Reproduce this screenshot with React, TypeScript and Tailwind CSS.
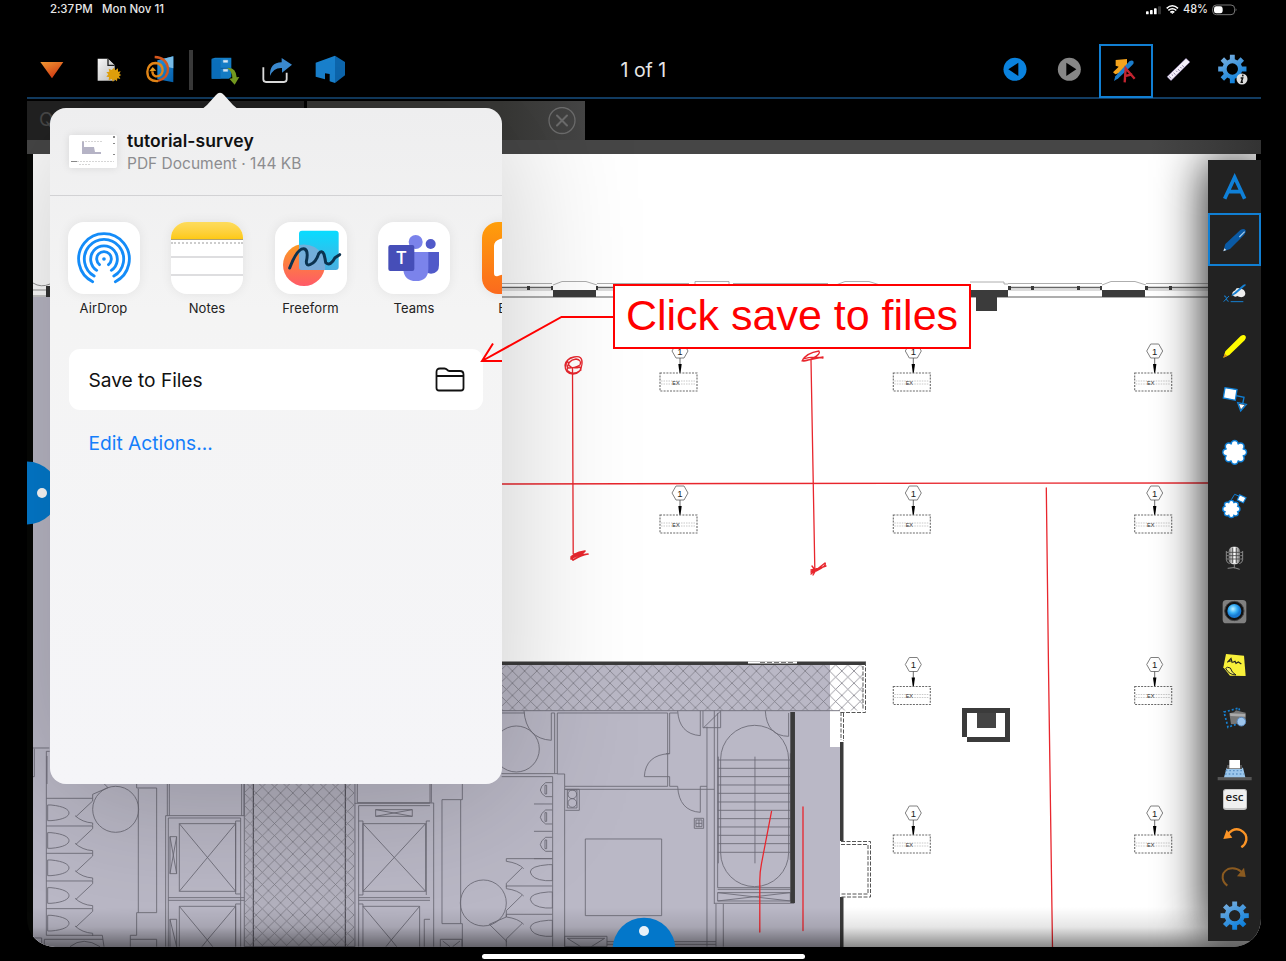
import React from "react";

const UI = "font-['Inter','Liberation_Sans',sans-serif]";

/** Icon cell: the view box is in thirds of a pixel. */
function Ico({ x, y, w = 159, h = 159, children }: { x: number; y: number; w?: number; h?: number; children: React.ReactNode }) {
  return (
    <svg className="block shrink-0" width={w / 3} height={h / 3} viewBox={`${x} ${y} ${w} ${h}`} fill="none">
      {children}
    </svg>
  );
}

function gearPath(cx: number, cy: number, outer: number, inner: number, hole: number) {
  let d = "";
  for (let i = 0; i < 8; i++) {
    const a = (i * Math.PI) / 4 - Math.PI / 2;
    const pts: [number, number][] = [
      [inner, -0.25],
      [outer, -0.17],
      [outer, 0.17],
      [inner, 0.25],
    ];
    for (const [r, o] of pts) {
      d += `${d ? "L" : "M"}${(cx + r * Math.cos(a + o)).toFixed(1)} ${(cy + r * Math.sin(a + o)).toFixed(1)}`;
    }
  }
  return `${d}ZM${cx - hole} ${cy}a${hole} ${hole} 0 1 0 ${2 * hole} 0a${hole} ${hole} 0 1 0 ${-2 * hole} 0Z`;
}

function Scallop({ cx, cy, r }: { cx: number; cy: number; r: number }) {
  const dots = Array.from({ length: 8 }, (_, i) => {
    const a = (i * Math.PI) / 4;
    return [cx + r * 0.72 * Math.cos(a), cy + r * 0.72 * Math.sin(a)];
  });
  return (
    <g>
      {dots.map(([x, y], i) => (
        <circle key={i} cx={x} cy={y} r={r * 0.26} stroke="#0f7fd6" strokeWidth="7" />
      ))}
      {dots.map(([x, y], i) => (
        <circle key={i} cx={x} cy={y} r={r * 0.23} fill="#fff" />
      ))}
      <circle cx={cx} cy={cy} r={r * 0.74} fill="#fff" />
    </g>
  );
}

function Defs() {
  return (
    <svg width="0" height="0" className="absolute">
      <defs>
        <linearGradient id="orange" x1="0" y1="0" x2="0.6" y2="1"><stop stopColor="#f59b33" /><stop offset="1" stopColor="#d83a12" /></linearGradient>
        <linearGradient id="blue" x1="0" y1="0" x2="1" y2="1"><stop stopColor="#2a9ae8" /><stop offset="1" stopColor="#0565b5" /></linearGradient>
        <linearGradient id="gear" x1="0" y1="0" x2="0.6" y2="1"><stop stopColor="#86b4de" /><stop offset="1" stopColor="#0b7fdc" /></linearGradient>
        <linearGradient id="paper" x1="0" y1="0" x2="1" y2="1"><stop stopColor="#fff" /><stop offset="1" stopColor="#c9c9c9" /></linearGradient>
        <linearGradient id="metal" x1="0" x2="1" y1="0" y2="0"><stop stopColor="#777" /><stop offset=".5" stopColor="#fff" /><stop offset="1" stopColor="#777" /></linearGradient>
        <radialGradient id="lens" cx=".4" cy=".35"><stop stopColor="#bff0ff" /><stop offset=".6" stopColor="#35aef5" /><stop offset="1" stopColor="#1878d0" /></radialGradient>
      </defs>
    </svg>
  );
}

function StatusBar() {
  return (
    <div className={`flex h-[19px] items-center justify-between pl-[50px] pr-[49px] text-[11.500px] font-medium text-[#e8e8e8] ${UI}`}>
      <div className="flex gap-[9px] whitespace-pre">
        <span className="w-[43px] tracking-[-0.1px] [word-spacing:-2px]">2:37 PM</span>
        <span>Mon Nov 11</span>
      </div>
      <div className="flex items-center">
        <svg width="91" height="14" viewBox="498 8 273 42" fill="none">
          <rect x="498" y="33" width="8" height="9" rx="2" fill="#fff" />
          <rect x="510" y="29" width="8" height="13" rx="2" fill="#fff" />
          <rect x="522" y="24" width="8" height="18" rx="2" fill="#fff" />
          <rect x="534" y="18" width="9" height="24" rx="2" fill="#333" />
          <path d="M560 24q17-15 34 0M565 30q12-10 24 0M571 36q6-5 12 0" stroke="#fff" strokeWidth="4.5" />
          <path d="M572 36h10l-5 5z" fill="#fff" />
          <text x="609" y="39" fill="#e8e8e8" fontSize="34" fontWeight="500" fontFamily="Inter" textLength="75" lengthAdjust="spacingAndGlyphs">48%</text>
          <rect x="698" y="14" width="66" height="29" rx="11" stroke="#777" strokeWidth="3" />
          <rect x="702" y="18" width="26" height="21" rx="7" fill="#fff" />
          <path d="M767 24q5 4 0 9z" fill="#777" />
        </svg>
      </div>
    </div>
  );
}

function Toolbar() {
  return (
    <div className="mt-6 ml-[25px] flex h-[54px] w-[1234px] items-center">
      <Ico x={15} y={129} w={162} h={162}>
        <path d="M61 186h69l-34 49z" fill="url(#orange)" />
      </Ico>
      <Ico x={177} y={129} w={162} h={162}>
        <path d="M233 176h31l20 20v46h-51z" fill="url(#paper)" />
        <path d="M264 176v20h20" fill="#ddd" stroke="#222" strokeWidth="4" />
        <path d="M282 203l4 8 8-6v10l8-1-4 8 6 3-7 4 4 8-9-2-1 9-8-6-4 8-4-9-9 4 1-10-8-1 6-7-6-6 9-2-2-9 9 4z" fill="#e9a60c" />
      </Ico>
      <Ico x={339} y={129} w={162} h={162}>
        <path d="M412 181l48-12v78l-48-9z" fill="url(#blue)" />
        <path d="M428 177l32-8v36q-22-2-32-28z" fill="#7cc4f2" />
        <path d="M404 171q36 2 40 34 1 29-30 38" stroke="#dd5a1e" strokeWidth="7" />
        <path d="M414 243q-32 2-32-28 3-26 25-26 21 2 21 23-3 18-21 17-10-3-10-15" stroke="#ee8d18" strokeWidth="7" />
        <path d="M388 214l10-13 11 11z" fill="#f5a520" />
      </Ico>
      <div className="ml-0.5 h-10 w-1 bg-[#3c3c3c]" />
      <div className="ml-[5px] flex">
        <Ico x={535} y={129} h={162}>
          <path d="M576 176l10-3h49v58l-8 5h-51z" fill="#1583d0" />
          <path d="M576 178h27v58h-27z" fill="#0b74c4" />
          <path d="M603 205h31" stroke="#0a4f8c" strokeWidth="2" />
          <path d="M611 181h13v6h-13zM611 208h13v6h-13z" fill="#e8f4ff" stroke="#bfe0f8" strokeWidth="2" />
          <path d="M622 204q27-3 29 28l8-1-14 23-16-18 9-1q1-20-16-31z" fill="#7ba322" />
        </Ico>
        <Ico x={694} y={129} h={162}>
          <path d="M731 202v36q0 8 8 8h54q8 0 8-8v-20" stroke="#e8e8e8" strokeWidth="5.500" />
          <path d="M751 228q-2-40 35-41v-13l31 20-30 24v-14q-25-2-36 24z" fill="#3d8fd8" />
        </Ico>
        <Ico x={853} y={129} h={162}>
          <path d="M888 188l58-21v82l-16-5v-22l-14-2v18l-28-8z" fill="#1a86d6" />
          <path d="M946 167l30 19v40l-30 23z" fill="#0d6ab4" />
        </Ico>
      </div>
      <div className={`flex-1 pt-0.5 pl-[263.500px] text-[19.500px] text-[#e6e6e6] ${UI}`}>
        <span className="whitespace-nowrap">1 of 1</span>
      </div>
      <Ico x={25} y={129} w={162} h={162}>
        <circle cx="106" cy="208" r="34.500" fill="#0a82de" />
        <path d="M86 208l30-20v40z" fill="#000" />
      </Ico>
      <Ico x={187} y={129} w={162} h={162}>
        <circle cx="269" cy="208" r="34.500" fill="#868686" />
        <path d="M290 208l-30-20v40z" fill="#000" />
      </Ico>
      <div className="ml-[3px] mt-px flex size-[54px] items-center justify-center border-2 border-[#117fd3]">
        <Ico x={363} y={135} w={150} h={150}>
          <path d="M407 177l34-3v20l-8 10-13 11-14 5-7-6 17-17-9-3z" fill="#f5a31c" />
          <path d="M449 180q8-4 12 2 1 5-4 10l-42 40-13 8 4-14z" fill="#1a7dcc" />
          <path d="M434 244l3-42 27 31M435 225l22-5" stroke="#c42430" strokeWidth="7" />
        </Ico>
      </div>
      <Ico x={519} y={129} w={162} h={162}>
        <path d="M561 230l57-55 12 11-57 56z" fill="#f5f0fa" stroke="#56467a" strokeWidth="1.500" />
        <path d="M568 229l5 6m2-12l4 4m2-9l5 6m2-12l4 4m2-9l5 6m2-12l4 4m2-9l5 6" stroke="#56467a" strokeWidth="2" />
      </Ico>
      <Ico x={681} y={129} w={157} h={162}>
        <path d={gearPath(757, 207, 43, 30, 17)} fill="url(#gear)" fillRule="evenodd" />
        <circle cx="786" cy="237" r="16.500" fill="#ddd" />
        <path d="M789 224l-1 5M782 234h6l-4 13h5" stroke="#111" strokeWidth="4.500" />
      </Ico>
    </div>
  );
}

function TabStrip() {
  return (
    <div className="ml-[27px] w-[1234px]">
      <div className="h-[2px] bg-[#123c62]" />
      <div className="h-[2px] bg-black" />
      <div className="flex h-[39px]">
        <div className={`mr-[3px] w-[277px] bg-[#222] pl-3 text-[19px] leading-[38px] text-[#484848] ${UI}`}>Q</div>
        <div className="flex w-[278px] items-center justify-end bg-linear-to-r from-[#383836] from-70% to-[#454545] pr-[9px]">
          <svg width="28" height="28" viewBox="0 0 28 28" fill="none" stroke="#6c6c6c" strokeWidth="1.300">
            <circle cx="14" cy="13.500" r="13" />
            <path d="M9 8.500l10 10M19 8.500l-10 10" strokeWidth="2" strokeLinecap="round" />
          </svg>
        </div>
      </div>
      <div className="flex h-[14px] bg-[#464646]">
        <div className="ml-auto w-[110px] bg-linear-to-r from-transparent to-[#333]" />
      </div>
    </div>
  );
}

function Fixture({ x, y }: { x: number; y: number }) {
  return (
    <g transform={`translate(${x} ${y})`}>
      <path d="M-8 0l4-7h8l4 7-4 7h-8z" fill="#fff" stroke="#808080" strokeWidth="1" />
      <text x="0" y="3.500" fontSize="9.500" textAnchor="middle" fontFamily="Liberation Sans" fill="#222">1</text>
      <path d="M0 7v10" stroke="#444" strokeWidth=".8" />
      <path d="M-1.700 13h3.400l-1.200 9h-1z" fill="#000" />
      <rect x="-20" y="22" width="37" height="18" stroke="#6a6a6a" strokeWidth="1.100" strokeDasharray="2 1.200" />
      <path d="M-19 30h35M-19 33h35" stroke="#bbb" strokeWidth=".8" strokeDasharray="1.500 1" />
      <text x="-4" y="33.500" fontSize="5.500" textAnchor="middle" fontFamily="Liberation Sans" fill="#333">EX</text>
    </g>
  );
}

const INK = "#6b6975";

function Shaft({ x, y, w, h }: { x: number; y: number; w: number; h: number }) {
  return <path d={`M${x} ${y}h${w}v${h}h${-w}zl${w} ${h}M${x + w} ${y}l${-w} ${h}`} />;
}

function FloorPlan() {
  return (
    <svg className="col-start-1 row-start-1 block" width="1234" height="793" viewBox="27 154 1234 793" fill="none">
      <defs>
        <pattern id="hatch" width="12.200" height="12.200" patternUnits="userSpaceOnUse">
          <path d="M0 0L12.200 12.200M12.200 0L0 12.200" stroke="#7a7883" strokeWidth=".75" />
        </pattern>
        <linearGradient id="floor" x1="0" y1="0" x2="0" y2="1">
          <stop stopColor="#000" stopOpacity="0" /><stop offset=".5" stopColor="#000" stopOpacity=".1" /><stop offset="1" stopColor="#000" stopOpacity=".46" />
        </linearGradient>
      </defs>
      <path d="M27 154h6v793h-6z" fill="#060705" />
      <path d="M33 154h1223v6h5v787H33z" fill="#fff" />
      <path d="M33 297h300v367h497v83h10v200H33z" fill="#bab8c6" />

      {/* facade */}
      <g>
        <path d="M33 283q8 5 17 1M33 290h13M33 296h13" stroke="#777" strokeWidth=".8" />
        <path d="M46 286h5v11h-5z" fill="#333" />
        <path d="M501 283.500h51M597 283.500h92M733 283.500h95M1008 283.500h94M1146 283.500h62M553 285l9-3.500h24l11 3.500M836 285l9-3.500h24l11 3.500M970 282h34v2h4M1102 285l9-3.500h24l11 3.500M695 284v-2.500h34v2.500" stroke="#999" strokeWidth=".8" />
        <path d="M501 287.500h52M596 287.500h374M1008 287.500h94M1146 287.500h62" stroke="#666" strokeWidth="1.400" />
        <path d="M501 290h52M596 290h374M1008 290h94M1146 290h62" stroke="#bbb" strokeWidth="1.200" />
        <path d="M501 297h707" stroke="#939393" strokeWidth="1.600" />
        <path d="M553 290h43v7h-43zM970 290h38v7h-38zM1102 290h43v7h-43zM976 297h21v14h-21zM527 286h3v4h-3zM551 286h2v4h-2zM596 286h2v4h-2zM1008 286h3v4h-3zM1031 286h3v4h-3zM1077 286h3v4h-3zM1100 286h2v4h-2zM1145 286h3v4h-3zM1169 286h3v4h-3z" fill="#3b3b3b" />
      </g>

      {/* corridor */}
      <path d="M830 664h36v47h-25v36h-11z" fill="#fff" />
      <path d="M501 664h362v46.500H501z" fill="url(#hatch)" />
      <path d="M501 661.500h365v3.500H501z" fill="#3b3b3b" />
      <path d="M748 661.500h49v2h-49z" fill="#fff" />
      <path d="M760 662.500h34" stroke="#777" strokeDasharray="5 2" />
      <path d="M865.500 662v50.500h-25M863 666v43M841 712v28M843.500 713v28" stroke="#555" strokeDasharray="4 1.500" />
      <path d="M840 742h3.500v99H840zM840 897h3.500v50H840z" fill="#3b3b3b" />
      <path d="M840 841h30v55h-30z" fill="#fff" />
      <path d="M841 841.500h29.500v55.500H841M841 844.500h27v49.500H841" stroke="#555" strokeDasharray="4 1.500" />

      {/* stair and office wing, drawn on a 1:3 grid */}
      <g transform="translate(430 640) scale(.3333)" stroke={INK} strokeWidth="2.600">
        <path d="M215 212h1015M215 219h69M364 219h10v182H215M382 219h331v220H404v-37h-22zM374 401h8M404 448h449M719 219h24M719 219v122h-11M719 410v29h24M719 410h-76M811 439h20M643 410q4-66 76-69M743 212q4 70 68 75v-75M743 439q4 74 68 78v-78M282 212q6 84 82 89v-82" />
        <circle cx="259" cy="327" r="69" />
        <path d="M404 439v481M368 410v510M215 410h153M831 260v660M853 212v580M880 792v128M858 792v128M531 905h327M531 913h327" />
        <path d="M819 212v51h53v-51M821 263l50-49M863 219v524h218M1076 219v70M853 790h240M863 748h218M863 758h218v25H863zl218 25M1081 758l-218 25" />
        <path d="M872 358a102 102 0 0 1 204 0v280a102 102 0 0 1-204 0zM865 350v320M1081 340v320M975 350v320M1006 212q4 76 70 77" />
        <path d="M863 360h218M863 385h218M863 410h218M863 435h218M863 460h218M863 486h218M863 511h218M863 536h218M863 561h218M863 586h218M863 611h218M863 637h218" />
        <path d="M1081 216h14v573h-14z" fill="#3b3b3b" stroke="none" />
        <path d="M466 597h229v230H466zM406 448h42v63h-42M412 450h29v54h-29zM793 535h28v30h-28zM798 540h18v20h-18zM807 540v20M798 550h18" />
        <circle cx="427" cy="463" r="13" /><circle cx="427" cy="489" r="13" />
        <path d="M404 889h127v31H404zM412 895h112M412 895l40 25M524 895l-40 25M31 898h65M31 898v22M38 903l22 17M90 903l-22 17M96 898v22" />
        <path d="M0 430v59h11v431M4 432v56M36 479h56v372H36zM97 430v49h-5M97 851v69M92 851h5" />
        <circle cx="160" cy="789" r="69" />
        {[428, 510, 592].map((y) => (
          <path key={y} d={`M367 ${y}h-20q-15 10-16 22q2 12 16 20h20M350 ${y + 8}h-5v26h5zM312 ${y + 64}h55`} />
        ))}
        {[656, 738, 823].map((y) => (
          <path key={y} d={`M367 ${y}H229v8q36 5 52 22M276 ${y + 28}l-47 46v10M367 ${y + 18}h-12q-54 4-54 22 4 22 46 26h20z`} />
        ))}
        <path d="M229 823v8l-51 22 51 50v17" />
      </g>

      {/* washrooms, lifts and riser, drawn on a 1:3 grid */}
      <g transform="translate(0 700) scale(.3333)" stroke={INK} strokeWidth="2.600">
        <path d="M99 144h49M103 146v84h-4M139 154v552h168l5 34M139 154h10M141 168v84" />
        {[295, 378, 460, 543, 626].map((y) => (
          <path key={y} d={`M139 ${y}h139v8l-50 47M225 ${y + 52}q22 20 53 22v8M143 ${y + 20}h10c40 4 54 14 54 24s-16 20-54 23h-10z`} />
        ))}
        <path d="M278 295v-12l46-20-14-14" />
        <circle cx="347" cy="328" r="69" />
        <path d="M410 250v14h60v374h-60v68h-19v34M415 266v372M391 718h79v22M133 740v-22h176M210 740q40-32 90 0M99 714h26v26" />
        <path d="M502 250v97M508 250v97M725 250v97M732 250v97M497 740V347h236M505 740V354h217v386M505 593h228M505 601h228M707 363h15M707 363v219h15M707 612h15M707 612v128" />
        <Shaft x={538} y={371} w={169} h={203} />
        <Shaft x={510} y={410} w={20} h={111} />
        <path d="M538 740V619h169v121M538 619l84 101 85-101M622 720l-16 20M622 720l16 20M510 740v-82h20v82M510 658l20 82" />
        <path d="M733 250h332v490H733z" fill="#000" fillOpacity=".03" />
        <path d="M760 250v490M1036 250v490" stroke="#3f3e46" strokeWidth="3" />
        <path d="M1072 250v58h218M1064 310h226M1076 740V317h214M1076 593h214M1076 601h214M1076 363h13v222h-13M1076 612h13v128M1279 363h11M1279 585V363" />
        <Shaft x={1127} y={329} w={110} h={20} />
        <Shaft x={1089} y={371} w={188} h={203} />
        <path d="M1089 619h170v121M1089 619l85 101 85-101M1174 720l-16 20M1174 720l16 20M1273 740v-82h17" />
      </g>
      <path d="M245 783h109v164H245z" fill="url(#hatch)" />

      {/* plinth */}
      <path d="M962 708h48v34h-43v-5h-5z" fill="#3b3b3b" />
      <path d="M967 713h38v24h-38z" fill="#fff" />
      <path d="M977 713h19v15h-19z" fill="#444" />

      {[680, 913.3, 1154.700].map((x) =>
        [351, 493, 664.500, 813].filter((y) => x > 700 || y < 600).map((y) => <Fixture key={`${x}-${y}`} x={x} y={y} />)
      )}

      {/* red ink */}
      <g stroke="#e8262d" strokeWidth="1.300" strokeLinecap="round" strokeLinejoin="round">
        <path d="M501 484l240-.5 467-.5" />
        <path d="M1046.300 488l2.200 180 4 279" />
        <path d="M572.500 368l.7 186M811 360l3.800 208M771.500 811.500l-10 52q-2 10-1.700 20v48.500M803 807v123.500" />
        <path d="M566 366q0-8 8-9 9-2 8 7-1 10-9 10-8 0-8-9 1-6 9-8M567 371q0-11 9-12 6 1 4 6-5 3-12 3M568 362q1 8 12 5l1 3q-8 6-13 1" />
        <path d="M571 559q1-6 14-8l-4 4 7-1q-7 1-15 6l-2-3 10-3-9 4M572 556l12-4M573 560l9-5M574 554l8 0" strokeWidth="1.700" />
        <path d="M802 361q4-8 17-10 2 3-6 7-8 4-10 3l20-4M803 359q9-3 20-1" />
        <path d="M811 574l14-11q2 3-9 8l-5 1 4-2-3-4M811 570l9-2 6-2M813 575l3-5" strokeWidth="1.400" />
      </g>

      <path d="M33 907h1228v40H33z" fill="url(#floor)" />
      <circle cx="27" cy="493" r="31.500" fill="#037bcf" />
      <circle cx="42" cy="493" r="5" fill="#fff" />
      <circle cx="644" cy="949" r="31.300" fill="#0377ca" />
      <circle cx="644" cy="931" r="5" fill="#e8f1f8" />
    </svg>
  );
}

function ToolPalette() {
  return (
    <div className="col-start-1 row-start-1 mt-1.5 mb-[7px] flex w-[53px] flex-col justify-self-end bg-[#222] shadow-[0_0_50px_rgba(0,0,0,0.95)]">
      <Ico x={55} y={29}>
        <path d="M105 145l30-64 30 64M114 124h42" stroke="#0f80d8" strokeWidth="11" />
      </Ico>
      <div className="flex size-[53px] items-center justify-center border-2 border-[#117fd3]">
        <Ico x={61} y={194} w={147} h={147}>
          <path d="M101 303l6-22 45-42q11-7 16 1 2 6-4 13l-43 43z" fill="#0a5aa5" />
          <path d="M149 260l16-16" stroke="#a9cdea" strokeWidth="3.500" />
          <path d="M101 303l3-9 6 5z" fill="#ddd" />
        </Ico>
      </div>
      <Ico x={55} y={347}>
        <path d="M129 434q-4-9 8-14 2-10 16-5 12 1 14 14 0 10-12 12-8-2-12-4-8 5-14-3z" fill="#eee" />
        <path d="M128 432l32-28q7-4 9 0l-30 26-14 8z" fill="#1680d2" />
        <path d="M103 437q6-2 7 7t7 9M118 437l-16 17M123 454h38" stroke="#1680d2" strokeWidth="3" />
      </Ico>
      <Ico x={55} y={506}>
        <path d="M101 622l6-19 46-46q10-7 15 1 3 7-3 12l-46 44z" fill="#fffb00" />
        <path d="M101 622l4-12 8 7z" fill="#d98a1c" />
      </Ico>
      <Ico x={55} y={665}>
        <path d="M106 712l36 6-5 32-36-7z" fill="#fff" stroke="#0f7fd6" strokeWidth="4" />
        <path d="M139 736l24 5-4 20M144 757l26 5-17 20z" stroke="#0f7fd6" strokeWidth="4" />
        <path d="M148 761l17 3-11 13z" fill="#fff" />
      </Ico>
      <Ico x={55} y={824}>
        <Scallop cx={135} cy={906} r={35} />
      </Ico>
      <Ico x={55} y={983}>
        <Scallop cx={125} cy={1076} r={25} />
        <path d="M125 1048l10-16 15 6" stroke="#0f7fd6" strokeWidth="3" />
        <path d="M150 1033l19 9-8 15-18-8z" fill="#fff" stroke="#0f7fd6" strokeWidth="3.500" />
      </Ico>
      <Ico x={55} y={2}>
        <rect x="117" y="49" width="34" height="53" rx="14" fill="url(#metal)" />
        <path d="M118 66h33M118 76h33M118 86h33M129 52v46M140 52v46" stroke="#444" strokeWidth="2.500" />
        <path d="M110 62v26q1 10 10 12M159 62v26q-1 10-10 12M110 66h7M110 76h7M110 86h7M152 66h7M152 76h7M152 86h7M134 100v14M114 114q20-6 36 3" stroke="#888" strokeWidth="3" />
      </Ico>
      <Ico x={55} y={161}>
        <rect x="99" y="209" width="71" height="70" rx="11" fill="#808080" />
        <circle cx="134" cy="242" r="29" fill="#111" stroke="#444" strokeWidth="3" />
        <circle cx="134" cy="242" r="21" fill="url(#lens)" />
      </Ico>
      <Ico x={55} y={320}>
        <path d="M109 371l54 5 5 61-47-1-20-25z" fill="#f8f03a" />
        <path d="M108 414q4-6 14-1 4 14 17 21-20 0-31-20z" fill="#f4ee62" stroke="#222" strokeWidth="3" />
        <path d="M113 396l11-12 4 14M117 393l10-3M130 396l6-3 3 6 7-4 9 6" stroke="#222" strokeWidth="3.500" />
      </Ico>
      <Ico x={55} y={479}>
        <path d="M103 545l45-12 7 43-40 15z" stroke="#1680d2" strokeWidth="5" strokeDasharray="6 6" />
        <path d="M119 549l14-3 6-6 16 4 13 3v31l-44 4z" fill="#777" />
        <path d="M121 549l46 2v8l-45-2z" fill="#aaa" />
        <circle cx="155" cy="574" r="13" fill="#9cc4ec" stroke="#5a86b8" strokeWidth="3" />
      </Ico>
      <Ico x={55} y={638} h={120}>
        <path d="M84 740h102v10H84z" fill="#555" />
        <path d="M111 712h49l7 29h-64z" fill="#9cc7ec" />
        <path d="M108 721h54M106 731h57" stroke="#5f94c6" strokeWidth="4" strokeDasharray="5 6" />
        <path d="M112 704h45v12h-45z" fill="#555" />
        <path d="M119 689h32v25h-32z" fill="#fff" />
      </Ico>
      <div className="mx-auto mt-[6px] mb-[7px] h-[21px] w-6 rounded-[3px] border border-b-2 border-[#c4c4c4] bg-[#f0f0f0] text-center font-['Open_Sans',sans-serif] text-[11.500px] font-semibold leading-[14px] text-[#222]">esc</div>
      <Ico x={55} y={860} h={120}>
        <path d="M115 911q18-20 37-12 20 10 18 30-3 14-15 22" stroke="#fb9426" strokeWidth="7" />
        <path d="M101 926l10-28 17 24z" fill="#fb9426" />
      </Ico>
      <Ico x={55} y={980} h={114}>
        <path d="M155 1024q-18-15-40-8-18 10-16 27 2 14 14 23" stroke="#8a5a20" strokeWidth="6" />
        <path d="M168 1040l-5-28-21 26z" fill="#8a5a20" />
      </Ico>
      <Ico x={55} y={1094} h={137}>
        <path d={gearPath(135, 1156, 43, 30, 17)} fill="url(#gear)" fillRule="evenodd" />
      </Ico>
    </div>
  );
}

function AppTile({ label, children }: { label: string; children: React.ReactNode }) {
  return (
    <div className="flex w-[72px] shrink-0 flex-col items-center">
      <div className="size-[72px] overflow-hidden rounded-2xl bg-white shadow-[0_0_12px_rgba(0,0,0,0.07)]">{children}</div>
      <span className="mt-[6px] whitespace-nowrap text-[13px] leading-[17px] tracking-[0.1px] text-[#222]">{label}</span>
    </div>
  );
}

function ShareSheet() {
  return (
    <div className={`absolute top-[108px] left-[50px] h-[675.500px] w-[451.500px] rounded-[16px] shadow-[0_10px_140px_rgba(0,0,0,0.22)] ${UI}`}>
      <svg className="absolute -top-[16px] left-[150px]" width="40" height="17" viewBox="0 0 40 17">
        <path d="M0 17q4-.5 7-4L16 3q4-4.500 8 0l9 10q3 3.500 7 4z" fill="#efefef" />
      </svg>
      <div className="flex h-full flex-col overflow-hidden rounded-[16px] bg-linear-to-b from-[#eeeeef] via-[#f4f4f4] via-30% to-[#f5f5f8]">
        <div className="flex h-[88px] shrink-0 gap-[10px] border-b border-[#d2d2d4] pt-[22px] pl-[19px]">
          <svg className="mt-[5px] rounded-[2px] shadow-[0_0_8px_rgba(0,0,0,0.1)]" width="48" height="33" viewBox="0 0 48 33" fill="none">
            <rect width="48" height="33" fill="#fff" />
            <path d="M13 6h2v6h10l1 5h6v2H13z" fill="#b5b3c5" />
            <path d="M13 6.500h20M2 26.500h43M10 29.500h12" stroke="#ccc" strokeWidth=".8" strokeDasharray="2 1" />
            <path d="M44 1h2v2h-2zM44 8h2v1h-2zM44 19h2v1h-2zM2 26h6v1H2z" fill="#888" />
          </svg>
          <div>
            <div className="text-[17.500px] leading-[21px] font-semibold tracking-[0.06px] text-[#111]">tutorial-survey</div>
            <div className="mt-[3px] text-[15.500px] leading-[20px] text-[#8c8c8f]">PDF Document · 144 KB</div>
          </div>
        </div>
        <div className="flex shrink-0 gap-[31.500px] pt-[26px] pl-[17.500px]">
          <AppTile label="AirDrop">
            <svg width="72" height="72" viewBox="0 0 216 216" fill="none" stroke="#148cf8" strokeWidth="8.500" strokeLinecap="round">
              <circle cx="108" cy="111" r="5.500" fill="#148cf8" stroke="none" />
              <path d="M94.500 128a22 22 0 1 1 27 0M86 145a40 40 0 1 1 44 0M78.500 162a59 59 0 1 1 59 0M74 179a76 76 0 1 1 68 0" />
            </svg>
          </AppTile>
          <AppTile label="Notes">
            <div className="h-[18px] border-b border-[#b0a070] bg-linear-to-b from-[#fddc5c] to-[#fdc90f]" />
            <div className="h-[4px] border-b-2 border-dotted border-[#ccc]" />
            <div className="h-[14px] border-b-2 border-[#dedee0]" />
            <div className="h-[18px] border-b-2 border-[#dedee0]" />
          </AppTile>
          <AppTile label="Freeform">
            <svg width="72" height="72" viewBox="702 366 216 216" fill="none">
              <defs>
                <linearGradient id="ffo" x1="0" y1="0" x2="0" y2="1"><stop stopColor="#fb9a22" /><stop offset="1" stopColor="#ff5a68" /></linearGradient>
                <linearGradient id="ffb" x1="0" y1="0" x2="0" y2="1"><stop stopColor="#08dcff" /><stop offset="1" stopColor="#4aaee0" /></linearGradient>
              </defs>
              <circle cx="789" cy="495" r="63" fill="url(#ffo)" />
              <rect x="774" y="392" width="119" height="118" rx="9" fill="url(#ffb)" />
              <path d="M774 435q45-8 72 30 8 22 6 45h-70q-8 0-8-8z" fill="#8aa8d4" opacity=".75" />
              <path d="M746 504q24-63 45-57 12 5 5 38 0 13 11 9 18-6 26-33 10-12 16 2 4 15 5 25 15 12 28-15l14-9" stroke="#0b3350" strokeWidth="9" strokeLinecap="round" strokeLinejoin="round" />
            </svg>
          </AppTile>
          <AppTile label="Teams">
            <svg width="72" height="72" viewBox="1014 366 216 216" fill="none">
              <circle cx="1127" cy="426" r="21" fill="#7b83eb" />
              <circle cx="1172" cy="432" r="15" fill="#5059c9" />
              <path d="M1150 456h47v39q0 26-24 26-15 0-23-16z" fill="#5059c9" />
              <path d="M1090 456h75v50q0 37-37 37t-38-37z" fill="#7b83eb" />
              <rect x="1045" y="435" width="78" height="78" rx="6" fill="#464eb8" />
              <text x="1084" y="493" fill="#fff" fontSize="54" fontWeight="600" textAnchor="middle" fontFamily="Open Sans">T</text>
            </svg>
          </AppTile>
          <AppTile label="Books">
            <svg width="72" height="72" viewBox="0 0 72 72">
              <defs><linearGradient id="bk" x1="0" y1="0" x2="0" y2="1"><stop stopColor="#ff9f0a" /><stop offset="1" stopColor="#fb6a1e" /></linearGradient></defs>
              <path d="M0 0h72v72H0z" fill="url(#bk)" />
              <path d="M36 20q-8-6-18-3-6 2-6 7v27q0 4 4 3 12-5 20 3 8-8 20-3 4 1 4-3V24q0-5-6-7-10-3-18 3z" fill="#fff" />
            </svg>
          </AppTile>
        </div>
        <div className="mr-auto ml-[18.500px] mt-[32px] flex h-[61px] w-[414px] shrink-0 items-center justify-between rounded-[11px] bg-white pr-[18px] pl-[20px] text-[19.200px] tracking-[-0.05px] text-[#111]">
          <span className="pt-0.5">Save to Files</span>
          <svg className="mt-px" width="30" height="26" viewBox="0 0 30 26" fill="none" stroke="#111" strokeWidth="1.800" strokeLinejoin="round">
            <path d="M1.500 21V5q0-3.500 3.500-3.500h4.500Q11 1.500 12 2.700T14.500 4H25q3.500 0 3.500 3.500V21q0 2.500-2.500 2.500H4Q1.500 23.500 1.500 21zM1.500 9h27" />
          </svg>
        </div>
        <div className="mt-[19px] pl-[38.500px] text-[19.200px] leading-[28px] text-[#147efb]">Edit Actions...</div>
      </div>
    </div>
  );
}

function Callout() {
  return (
    <>
      <svg className="absolute top-[310px] left-[478px]" width="138" height="56" viewBox="478 310 138 56" fill="none" stroke="#f00" strokeWidth="2">
        <path d="M614 317h-52.500L482 361M493 343.500L482 361h20" />
      </svg>
      <div className="absolute top-[284px] left-[613px] flex h-[65px] w-[358px] items-center justify-center border-2 border-[#f00] bg-white pb-[3px] font-['Liberation_Sans',sans-serif] text-[43px] whitespace-nowrap text-[#f00]">
        Click save to files
      </div>
    </>
  );
}

export default function App() {
  return (
    <div className="relative h-[961px] w-[1286px] overflow-hidden bg-black">
      <Defs />
      <StatusBar />
      <Toolbar />
      <TabStrip />
      <div className="ml-[27px] grid h-[793px] w-[1234px] overflow-hidden rounded-b-[28px]">
        <FloorPlan />
        <ToolPalette />
      </div>
      <div className="mx-auto mt-[6.500px] h-[5px] w-[323px] rounded-full bg-white" />
      <ShareSheet />
      <Callout />
    </div>
  );
}
